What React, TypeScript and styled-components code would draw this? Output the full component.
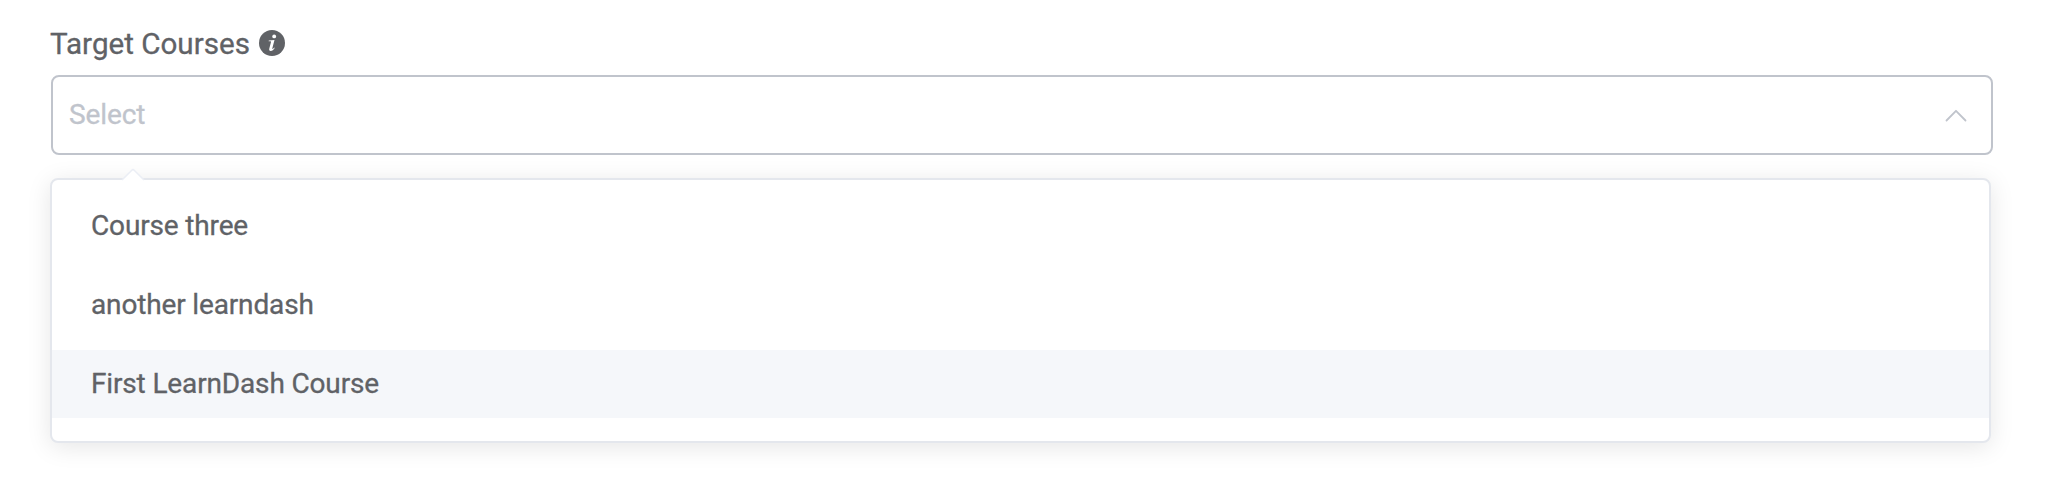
import React from 'react';
import styled, { createGlobalStyle } from 'styled-components';

const Global = createGlobalStyle`
  *{box-sizing:border-box}
  body{margin:0;background:#fff;font-family:Roboto,"Liberation Sans",sans-serif;color:#606266;}
`;
const Field = styled.main`
  display:flex;flex-direction:column;height:499px;padding:22px 55px 0 50px;
`;
const Label = styled.label`
  display:flex;align-items:center;height:44px;font-size:29.6px;line-height:44px;
  -webkit-text-stroke:0.3px currentColor;
`;
const InfoIcon = styled.svg`
  display:block;margin:0 0 2px 9.5px;
`;
const SelectBox = styled.div`
  display:flex;align-items:center;justify-content:space-between;height:80px;margin:9px 0 0 1px;
  padding:0 24px 0 16px;border:2px solid #c0c4cc;border-radius:8px;background:#fff;
`;
const Placeholder = styled.span`
  font-size:28px;line-height:40px;color:#c0c4cc;letter-spacing:-0.1px;
  -webkit-text-stroke:0.3px currentColor;
`;
const Menu = styled.ul`
  position:relative;list-style:none;margin:23px 2px 0 0;padding:12px 0 24px;height:265px;
  border:2px solid #e4e7ed;border-radius:8px;background:#fff;box-shadow:0 4px 24px rgba(0,0,0,.1);
`;
const Arrow = styled.svg`
  position:absolute;left:69px;top:-12px;
`;
const Option = styled.li<{ $active?: boolean }>`
  height:68px;margin-bottom:11px;padding:0 39px;font-size:28px;line-height:67px;
  letter-spacing:-0.15px;-webkit-text-stroke:0.3px currentColor;
  background:${p => (p.$active ? '#f5f7fa' : 'transparent')};
`;

const courses = ['Course three', 'another learndash', 'First LearnDash Course'];

export default function App() {
  return (
    <>
      <Global />
      <Field>
        <Label>
          Target Courses
          <InfoIcon width="26" height="26" viewBox="0 0 26 26">
            <circle cx="13" cy="13" r="13" fill="#606266" />
            <circle cx="15.2" cy="6.4" r="1.9" fill="#fff" />
            <path
              d="M9.8 10.6L15.5 10l-2.1 8.1c-.2.9.2 1 .7.6l1.1-1.2.5.4c-1.2 1.9-2.5 3-4 3-1.4 0-1.8-1-1.4-2.4l1.6-6.1c.2-.8 0-1.1-.7-1.1H9.6z"
              fill="#fff"
            />
          </InfoIcon>
        </Label>
        <SelectBox>
          <Placeholder>Select</Placeholder>
          <svg width="22" height="13" viewBox="0 0 22 13" fill="none" stroke="#c0c4cc" strokeWidth="1.8" strokeLinecap="round" strokeLinejoin="round">
            <path d="M1.5 11.5L11 1.8l9.5 9.7" />
          </svg>
        </SelectBox>
        <Menu>
          <Arrow width="24" height="13" viewBox="0 0 24 13">
            <path d="M1 12L10.8 2.2Q12 1 13.2 2.2L23 12v1H1z" fill="#fff" />
            <path d="M1 12L10.8 2.2Q12 1 13.2 2.2L23 12" fill="none" stroke="#ebeef5" strokeWidth="1.5" />
          </Arrow>
          {courses.map((c, i) => <Option key={c} $active={i === 2}>{c}</Option>)}
        </Menu>
      </Field>
    </>
  );
}
